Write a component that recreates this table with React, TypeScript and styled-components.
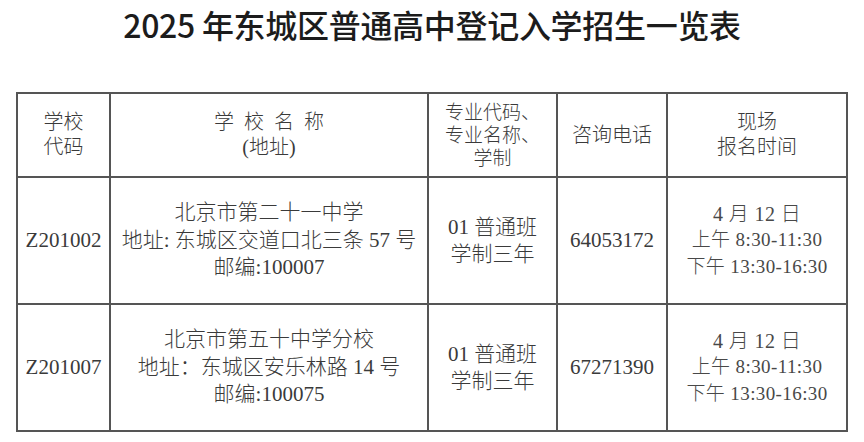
import React from "react";
import styled, { createGlobalStyle } from "styled-components";

const Global = createGlobalStyle`
  html, body { margin: 0; padding: 0; background: #ffffff; }
  body { width: 864px; height: 442px; overflow: hidden; }
`;

const Page = styled.div`
  width: 864px;
  height: 442px;
  background: #fff;
  display: flex;
  flex-direction: column;
  align-items: flex-start;
`;

const Title = styled.h1`
  align-self: stretch;
  margin: 0;
  padding-top: 2px;
  height: 44px;
  line-height: 44px;
  text-align: center;
  font-family: "Noto Sans CJK SC", "Liberation Sans", sans-serif;
  font-size: 32px;
  font-weight: 500;
  color: #1c1c1c;
  letter-spacing: -0.3px;
`;

const Table = styled.table`
  margin: 46px 0 0 16px;
  width: 832px;
  table-layout: fixed;
  border-collapse: collapse;
  font-family: "Liberation Serif", "Noto Sans CJK SC", serif;
  color: #3a3a3a;
`;

const Cell = styled.td<{ $size?: number; $lh?: number; $color?: string; $ls?: number }>`
  border: 2px solid #555;
  padding: 0;
  text-align: center;
  vertical-align: middle;
  font-size: ${(p) => p.$size ?? 21}px;
  line-height: ${(p) => p.$lh ?? 27}px;
  color: ${(p) => p.$color ?? "#3a3a3a"};
  letter-spacing: ${(p) => p.$ls ?? 0}px;
  font-weight: 300;
`;

const Row = styled.tr<{ $h: number }>`
  height: ${(p) => p.$h}px;
`;

const Line = styled.span<{ $size?: number; $ws?: number }>`
  display: block;
  white-space: nowrap;
  ${(p) => (p.$size ? `font-size: ${p.$size}px;` : "")}
  ${(p) => (p.$ws ? `word-spacing: ${p.$ws}px;` : "")}
`;

type School = {
  code: string;
  name: string;
  addr: string;
  post: string;
  phone: string;
};

const schools: School[] = [
  {
    code: "Z201002",
    name: "北京市第二十一中学",
    addr: "地址: 东城区交道口北三条 57 号",
    post: "邮编:100007",
    phone: "64053172",
  },
  {
    code: "Z201007",
    name: "北京市第五十中学分校",
    addr: "地址：东城区安乐林路 14 号",
    post: "邮编:100075",
    phone: "67271390",
  },
];

export default function App() {
  return (
    <Page>
      <Global />
      <Title>2025 年东城区普通高中登记入学招生一览表</Title>
      <Table>
        <colgroup>
          <col style={{ width: 93 }} />
          <col style={{ width: 318 }} />
          <col style={{ width: 129 }} />
          <col style={{ width: 110 }} />
          <col style={{ width: 180 }} />
        </colgroup>
        <tbody>
          <Row $h={84}>
            <Cell $size={20} $lh={25}>
              <Line>学校</Line>
              <Line>代码</Line>
            </Cell>
            <Cell $size={20} $lh={25}>
              <Line $ws={5}>学 校 名 称</Line>
              <Line>(地址)</Line>
            </Cell>
            <Cell $size={19} $lh={23}>
              <Line>专业代码、</Line>
              <Line>专业名称、</Line>
              <Line>学制</Line>
            </Cell>
            <Cell $size={20} $lh={25}>
              咨询电话
            </Cell>
            <Cell $size={20} $lh={25}>
              <Line>现场</Line>
              <Line>报名时间</Line>
            </Cell>
          </Row>
          {schools.map((s) => (
            <Row $h={127} key={s.code}>
              <Cell $size={21}>{s.code}</Cell>
              <Cell $size={21} $lh={27.5}>
                <Line>{s.name}</Line>
                <Line>{s.addr}</Line>
                <Line>{s.post}</Line>
              </Cell>
              <Cell $size={21}>
                <Line>01 普通班</Line>
                <Line>学制三年</Line>
              </Cell>
              <Cell $size={21}>{s.phone}</Cell>
              <Cell $size={19} $lh={26.5} $color="#484848" $ls={0.4}>
                <Line $size={20}>4 月 12 日</Line>
                <Line>上午 8:30-11:30</Line>
                <Line>下午 13:30-16:30</Line>
              </Cell>
            </Row>
          ))}
        </tbody>
      </Table>
    </Page>
  );
}
